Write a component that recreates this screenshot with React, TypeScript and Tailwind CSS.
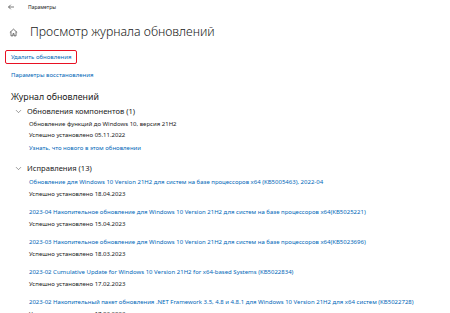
import { ChevronDown } from "lucide-react";

const fixes = [
    { title: "Обновление для Windows 10 Version 21H2 для систем на базе процессоров x64 (KB5005463), 2022-04", date: "18.04.2023" },
    { title: "2023-04 Накопительное обновление для Windows 10 Version 21H2 для систем на базе процессоров x64(KB5025221)", date: "15.04.2023" },
    { title: "2023-03 Накопительное обновление для Windows 10 Version 21H2 для систем на базе процессоров x64(KB5023696)", date: "18.03.2023" },
    { title: "2023-02 Cumulative Update for Windows 10 Version 21H2 for x64-based Systems (KB5022834)", date: "17.02.2023" },
    { title: "2023-02 Накопительный пакет обновления .NET Framework 3.5, 4.8 и 4.8.1 для Windows 10 Version 21H2 для x64 систем (KB5022728)", date: "17.03.2023" },
];

const Group = ({ title }: { title: string }) => (
    <div className="flex items-center h-[12px] pl-[14px] text-[7.6px] leading-[12px] text-[#1a1a1a]">
        <ChevronDown size={9} strokeWidth={1.3} className="mr-[4px] text-[#333]" />
        <span>{title}</span>
    </div>
);

export default function App() {
    return (
        <div
            className="w-[450px] h-[313px] overflow-hidden bg-white text-[#1a1a1a]"
            style={{ fontFamily: '"Noto Sans", "Open Sans", sans-serif' }}
        >
            <div className="flex items-center h-[14px] pl-[7px]">
                <svg width="8" height="8" viewBox="0 0 16 16" className="text-[#444]">
                    <path d="M14 8H3M7.5 3.5L3 8l4.5 4.5" fill="none" stroke="currentColor" strokeWidth="1.4" />
                </svg>
                <span className="ml-[13px] text-[5px] leading-[14px] text-[#222]">Параметры</span>
            </div>

            <div className="flex items-center h-[16px] mt-[10px] pl-[9px]">
                <svg width="9" height="9" viewBox="0 0 16 16" className="text-[#333]">
                    <path d="M1.5 8L8 2l6.5 6M3.5 6.5V14h3.5v-4h2v4h3.5V6.5" fill="none" stroke="currentColor" strokeWidth="1.2" />
                </svg>
                <span className="ml-[12px] text-[12.3px] font-light leading-[16px]">
                    Просмотр журнала обновлений
                </span>
            </div>

            <div className="mt-[10px] ml-[5px] inline-flex items-center h-[14px] px-[5px] border-[1.5px] border-[#e81123] rounded-[2px]">
                <span className="text-[6px] leading-[10px] text-[#0067b8]">Удалить обновления</span>
            </div>

            <div className="mt-[5px] pl-[11px] h-[10px] text-[6px] leading-[10px] text-[#0067b8]">
                Параметры восстановления
            </div>

            <div className="mt-[10px] pl-[11px] h-[14px] text-[8.8px] leading-[14px]">Журнал обновлений</div>

            <div className="mt-[1px]">
                <Group title="Обновления компонентов (1)" />
            </div>
            <div className="pl-[29px] text-[6px] leading-[10px]">
                <div className="mt-[2px] h-[10px]">Обновление функций до Windows 10, версия 21H2</div>
                <div className="mt-[1px] h-[10px]">Успешно установлено 05.11.2022</div>
                <div className="mt-[3px] h-[10px] text-[#0067b8]">Узнать, что нового в этом обновлении</div>
            </div>

            <div className="mt-[9px]">
                <Group title="Исправления (13)" />
            </div>
            <div className="mt-[3px] pl-[29px] text-[6px] leading-[10px] flex flex-col gap-[8.5px]">
                {fixes.map((f) => (
                    <div key={f.title} className="flex flex-col gap-[1.5px]">
                        <div className="h-[10px] whitespace-nowrap text-[#0067b8]">{f.title}</div>
                        <div className="h-[10px]">Успешно установлено {f.date}</div>
                    </div>
                ))}
            </div>
        </div>
    );
}
